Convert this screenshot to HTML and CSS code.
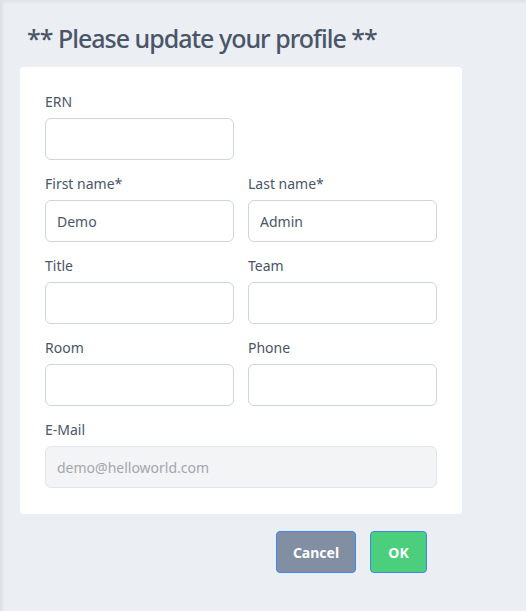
FILE: index.html
```html
<!DOCTYPE html>
<html>
<head>
<meta charset="utf-8">
<link rel="stylesheet" href="styles.css">
</head>
<body>
<div class="page">
  <h1 class="title">** Please update your profile **</h1>
  <div class="card">
    <div class="grid">
      <div class="field">
        <label class="label">ERN</label>
        <input class="input" type="text">
      </div>
      <div></div>
      <div class="field">
        <label class="label">First name*</label>
        <input class="input" type="text" value="Demo">
      </div>
      <div class="field">
        <label class="label">Last name*</label>
        <input class="input" type="text" value="Admin">
      </div>
      <div class="field">
        <label class="label">Title</label>
        <input class="input" type="text">
      </div>
      <div class="field">
        <label class="label">Team</label>
        <input class="input" type="text">
      </div>
      <div class="field">
        <label class="label">Room</label>
        <input class="input" type="text">
      </div>
      <div class="field">
        <label class="label">Phone</label>
        <input class="input" type="text">
      </div>
      <div class="field wide">
        <label class="label">E-Mail</label>
        <input class="input disabled" type="text" value="demo@helloworld.com" disabled>
      </div>
    </div>
  </div>
  <div class="actions">
    <button class="btn cancel">Cancel</button>
    <button class="btn ok">OK</button>
  </div>
</div>
</body>
</html>
```
FILE: styles.css
```css
html, body {
  margin: 0;
  padding: 0;
  height: 100%;
}
body {
  background: #ebeef3;
  font-family: "Noto Sans", "Open Sans", sans-serif;
  color: #4a5568;
  box-shadow: inset 4px 3px 4px -2px rgba(0,0,0,0.08);
}
.page {
  padding: 20px 0 0 20px;
  width: 442px;
}
.title {
  margin: 0 0 10px 7px;
  font-size: 25px;
  line-height: 37px;
  font-weight: 500;
  letter-spacing: -1px;
  color: #4a5568;
}
.card {
  background: #fff;
  border-radius: 4px;
  padding: 25px 25px 26px 25px;
}
.grid {
  display: grid;
  grid-template-columns: 189px 189px;
  column-gap: 14px;
  row-gap: 14px;
}
.wide {
  grid-column: 1 / 3;
}
.field {
  display: flex;
  flex-direction: column;
}
.label {
  font-size: 14px;
  line-height: 20px;
  margin-bottom: 6px;
  color: #4a5568;
}
.input {
  box-sizing: border-box;
  height: 42px;
  border: 1px solid #cfd5dd;
  border-radius: 6px;
  padding: 0 11px;
  font-family: inherit;
  font-size: 14px;
  color: #4a5568;
  background: #fff;
  outline: none;
}
.input.disabled {
  background: #f3f4f5;
  border-color: #e2e5e9;
  color: #a2a7ae;
}
.actions {
  display: flex;
  justify-content: flex-end;
  gap: 14px;
  padding: 17px 35px 0 0;
}
.btn {
  box-sizing: border-box;
  height: 42px;
  border: 1px solid #3f86f0;
  border-radius: 4px;
  color: #fff;
  font-family: inherit;
  font-weight: 700;
  font-size: 14px;
}
.cancel {
  width: 80px;
  background: #828ea2;
}
.ok {
  width: 57px;
  background: #4ccf7d;
}
```
